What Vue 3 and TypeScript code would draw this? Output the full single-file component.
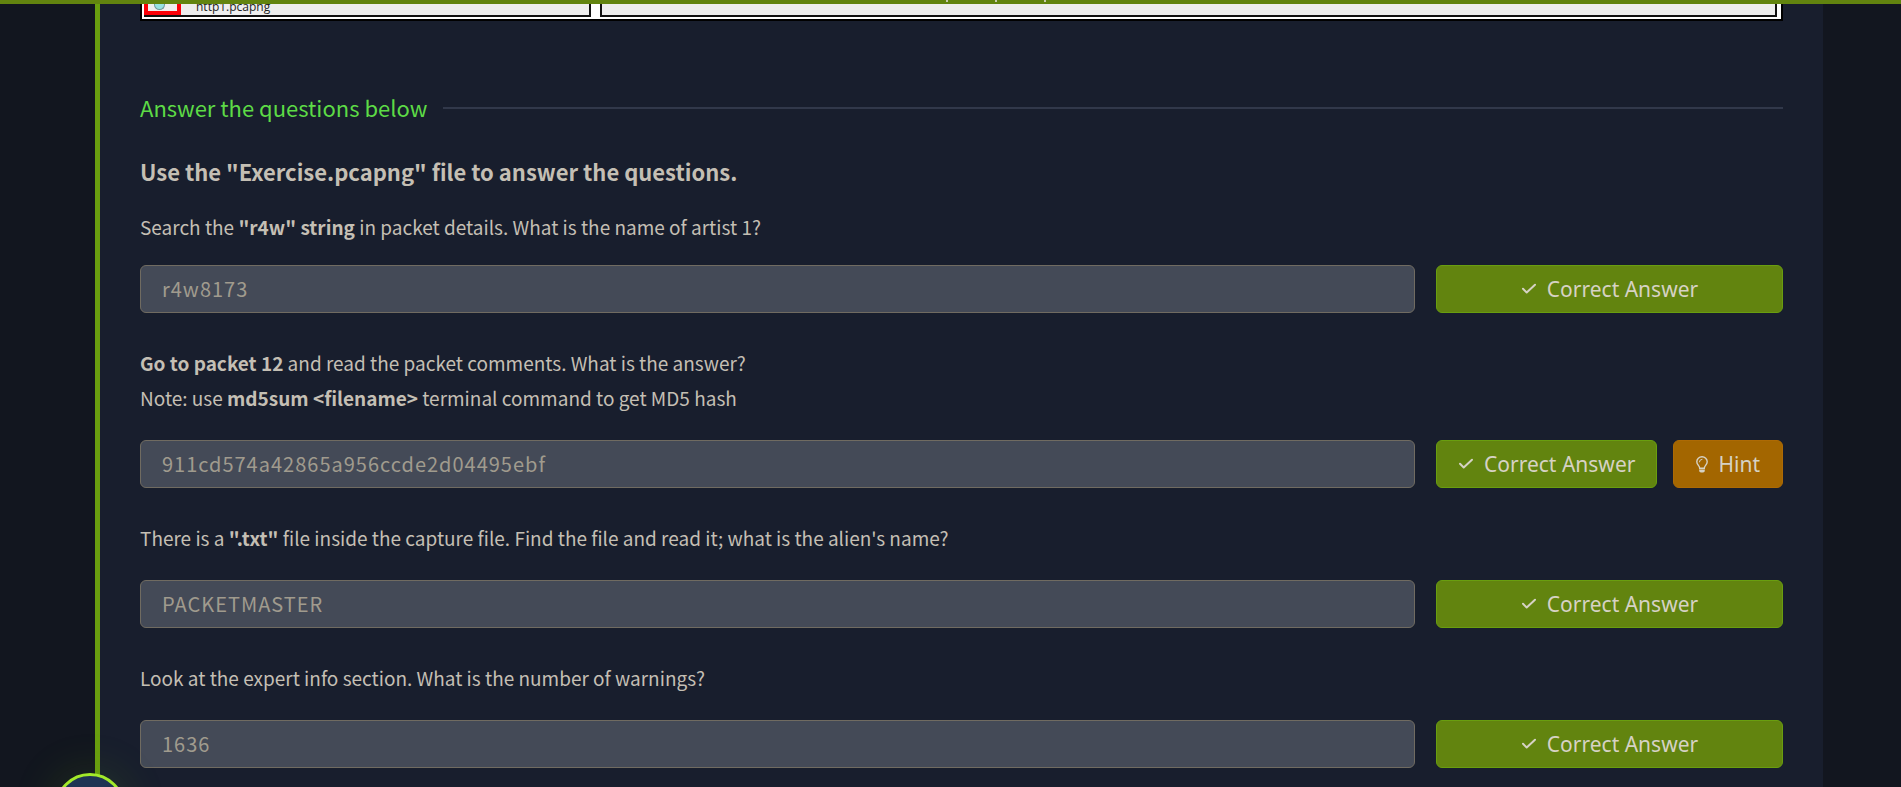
<script setup lang="ts">
interface TextPart {
  text: string
  bold?: boolean
}

interface Question {
  id: string
  lines: TextPart[][]
  answer: string
  hint?: boolean
}

const questions: Question[] = [
  {
    id: 'artist',
    lines: [
      [
        { text: 'Search the ' },
        { text: '"r4w" string', bold: true },
        { text: ' in packet details. What is the name of artist 1?' },
      ],
    ],
    answer: 'r4w8173',
  },
  {
    id: 'packet',
    lines: [
      [
        { text: 'Go to packet 12', bold: true },
        { text: ' and read the packet comments. What is the answer?' },
      ],
      [
        { text: 'Note: use ' },
        { text: 'md5sum <filename>', bold: true },
        { text: ' terminal command to get MD5 hash' },
      ],
    ],
    answer: '911cd574a42865a956ccde2d04495ebf',
    hint: true,
  },
  {
    id: 'alien',
    lines: [
      [
        { text: 'There is a ' },
        { text: '".txt"', bold: true },
        { text: " file inside the capture file. Find the file and read it; what is the alien's name?" },
      ],
    ],
    answer: 'PACKETMASTER',
  },
  {
    id: 'warnings',
    lines: [[{ text: 'Look at the expert info section. What is the number of warnings?' }]],
    answer: '1636',
  },
]
</script>

<template>
  <div class="page">
    <div class="topbar"><i></i><i></i><i></i></div>
    <main class="panel">
      <div class="capture">
        <div class="pane files">
          <span class="mark"><span class="dot"></span></span>
          <span class="file">http1.pcapng</span>
        </div>
        <div class="pane"></div>
      </div>

      <h2 class="section"><span>Answer the questions below</span></h2>
      <h3 class="intro">Use the "Exercise.pcapng" file to answer the questions.</h3>

      <form class="questions" @submit.prevent>
        <div v-for="q in questions" :key="q.id" class="question">
          <label :for="q.id" class="prompt">
            <span v-for="(line, n) in q.lines" :key="n" class="line">
              <component :is="part.bold ? 'strong' : 'span'" v-for="(part, k) in line" :key="k">{{ part.text }}</component>
            </span>
          </label>
          <div class="row">
            <input :id="q.id" class="answer" type="text" :value="q.answer" readonly />
            <div class="actions">
              <button type="button" class="btn correct">
                <svg width="16" height="12" viewBox="0 0 16 12" aria-hidden="true">
                  <path d="M2 5.8 L5.7 9.5 L14 1.7" fill="none" stroke="currentColor" stroke-width="2" stroke-linecap="round" stroke-linejoin="round" />
                </svg>
                <span>Correct Answer</span>
              </button>
              <button v-if="q.hint" type="button" class="btn hint">
                <svg width="12" height="17" viewBox="0 0 12 17" aria-hidden="true">
                  <path d="M3.7 12.2 C3.7 9.7 0.8 9 0.8 5.8 A5.2 5 0 0 1 11.2 5.8 C11.2 9 8.3 9.7 8.3 12.2 Z" fill="none" stroke="currentColor" stroke-width="1.4" />
                  <path d="M3.4 5.9 A2.7 2.7 0 0 1 6 3.3" fill="none" stroke="currentColor" stroke-width="1" stroke-linecap="round" />
                  <path d="M3 13.4 H9 L8.6 15.3 L7.4 16.6 H4.6 L3.4 15.3 Z" fill="currentColor" />
                </svg>
                <span>Hint</span>
              </button>
            </div>
          </div>
        </div>
      </form>
    </main>
    <div class="node"></div>
  </div>
</template>

<style>
body {
  margin: 0;
  background: #12161f;
}
</style>

<style scoped>
.page {
  position: relative;
  box-sizing: border-box;
  min-height: 100vh;
  padding: 0 78px 0 95px;
  overflow: hidden;
  background: #12161f;
  color: #c4bfb4;
  font-family: "Noto Sans CJK SC", "Noto Sans", sans-serif;
  display: flex;
}

.topbar {
  position: fixed;
  z-index: 2;
  top: 0;
  left: 0;
  right: 0;
  height: 4px;
  background: #62840f;
  display: flex;
  justify-content: center;
  gap: 47px;
  padding-left: 90px;
}

.topbar i {
  width: 2px;
  height: 2px;
  background: #c9cdb0;
}

.panel {
  flex: 1;
  min-width: 0;
  box-sizing: border-box;
  padding: 0 40px 19px;
  border-left: 5px solid #699e0f;
  background: #181e2d;
}

.capture {
  box-sizing: border-box;
  height: 21px;
  padding: 0 4px 3px 2px;
  border: 2px solid #000;
  border-top: 0;
  background: #fff;
  display: grid;
  grid-template-columns: minmax(0, 447fr) minmax(0, 1178fr);
  gap: 9px;
}

.pane {
  box-sizing: border-box;
  border: 2px solid #111;
  border-top: 0;
  background: #eee;
}

.files {
  display: flex;
  align-items: flex-start;
  gap: 15px;
  border-left: 0;
}

.mark {
  box-sizing: border-box;
  width: 37px;
  height: 15px;
  border: 4px solid #fb0007;
  border-top: 0;
  display: flex;
  padding-left: 6px;
}

.dot {
  box-sizing: border-box;
  width: 11px;
  height: 10px;
  border: 1px solid #6f9a9b;
  border-top: 0;
  border-radius: 0 0 6px 6px;
  background: #97e2e2;
}

.file {
  color: #222;
  font: 12px/14px "Open Sans", sans-serif;
}

.section {
  margin: 70px 0 0;
  display: flex;
  align-items: center;
  gap: 16px;
  color: #5ddb46;
  font-size: 22px;
  font-weight: 400;
  line-height: 32px;
}

.section span {
  padding-bottom: 2px;
}

.section::after {
  content: "";
  flex: 1;
  height: 2px;
  background: #31384a;
}

.intro {
  margin: 29px 0 0;
  font-size: 22px;
  font-weight: 700;
  line-height: 34px;
}

.questions {
  margin-top: 21px;
  display: grid;
  gap: 32px;
}

.prompt {
  display: block;
  margin-bottom: 25px;
  font-size: 19px;
  line-height: 35px;
}

.question:first-child .prompt {
  margin-bottom: 21px;
}

.line {
  display: block;
}

.line span,
.line strong {
  white-space: pre-wrap;
}

.row {
  display: grid;
  grid-template-columns: minmax(0, 1275fr) minmax(0, 347fr);
  gap: 21px;
}

.answer {
  box-sizing: border-box;
  width: 100%;
  height: 48px;
  margin: 0;
  padding: 0 21px 2px;
  border: 1px solid #706b61;
  border-radius: 6px;
  outline: 0;
  background: #444a57;
  color: #a09b8e;
  font: 20px/28px "Noto Sans CJK SC", "Noto Sans", sans-serif;
  letter-spacing: 1px;
}

.actions {
  display: flex;
  gap: 16px;
}

.btn {
  box-sizing: border-box;
  height: 48px;
  margin: 0;
  padding: 0 20px;
  border: 1px solid;
  border-radius: 6px;
  display: flex;
  align-items: center;
  justify-content: center;
  gap: 10px;
  color: #d6d2c4;
  font: 21px/30px "Noto Sans", "Open Sans", sans-serif;
  white-space: nowrap;
}

.correct {
  flex: 1;
  border-color: #699e0f;
  background: #62840f;
}

.hint {
  padding: 0 22px;
  border-color: #ad6a04;
  background: #a36600;
}

.node {
  position: absolute;
  left: 55px;
  bottom: -56px;
  box-sizing: border-box;
  width: 70px;
  height: 70px;
  border: 3px solid #a3ea2a;
  border-radius: 50%;
  background: #1f3454;
  box-shadow: 0 0 45px rgba(100, 160, 20, 0.2);
}
</style>
